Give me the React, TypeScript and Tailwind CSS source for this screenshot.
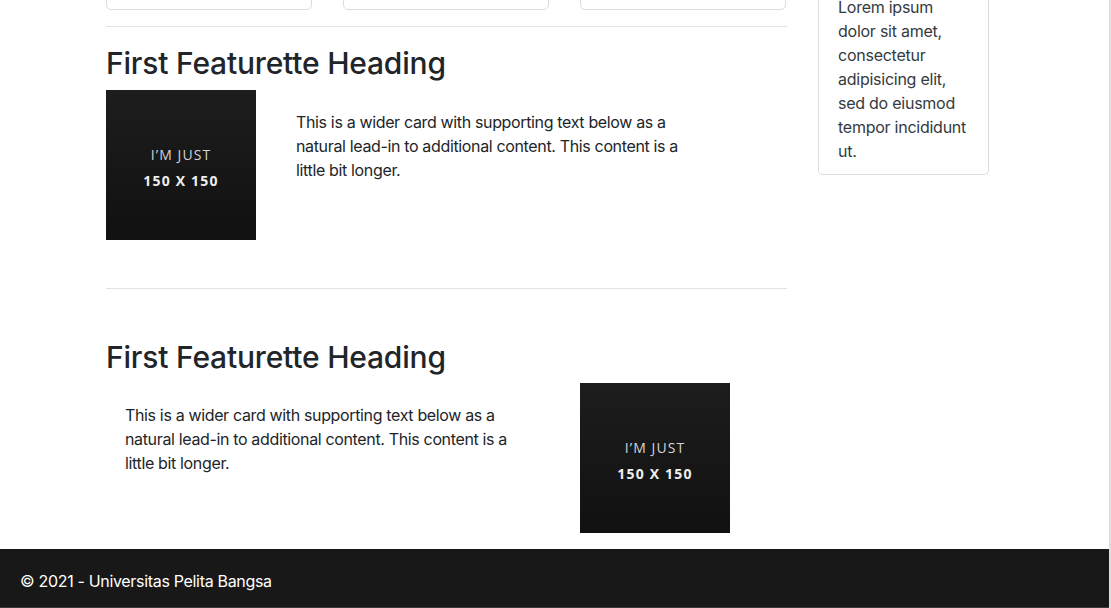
import React from "react";

function Placeholder() {
  return (
    <div className="w-[150px] h-[150px] shrink-0 bg-gradient-to-b from-[#1d1d1d] to-[#111111] flex flex-col items-center justify-center pt-[6px]" style={{ fontFamily: "'Open Sans', 'Lato', sans-serif" }}>
      <div className="text-[14px] leading-[16px] text-[#d4d4d4] tracking-[1.1px]">I’M JUST</div>
      <div className="text-[14px] leading-[18px] text-[#eeeeee] font-bold tracking-[1.2px] mt-[9px]">150 X 150</div>
    </div>
  );
}

export default function App() {
  const para = "This is a wider card with supporting text below as a natural lead-in to additional content. This content is a little bit longer.";
  return (
    <div className="w-[1111px] h-[608px] overflow-hidden bg-white flex flex-col border-r-2 border-[#dedede] text-[#212529]" style={{ fontFamily: "Inter, 'Noto Sans', sans-serif" }}>
      <div className="flex-1 overflow-hidden">
        <div className="flex pl-[106px] -mt-[90px]">
          <div className="w-[681px] shrink-0">
            <div className="flex gap-[31px]">
              <div className="w-[206px] h-[100px] border border-[#dcdcdc] rounded-[5px]" />
              <div className="w-[206px] h-[100px] border border-[#dcdcdc] rounded-[5px]" />
              <div className="w-[206px] h-[100px] border border-[#dcdcdc] rounded-[5px]" />
            </div>
            <div className="h-px bg-[#e2e2e2] mt-[16px]" />
            <h2 className="mt-[17px] text-[30px] leading-[38px] font-medium tracking-[-0.2px]">First Featurette Heading</h2>
            <div className="flex mt-[8px]">
              <Placeholder />
              <p className="ml-[40px] mt-[20px] w-[400px] text-[16px] leading-[24px] tracking-[-0.35px]">{para}</p>
            </div>
            <div className="h-px bg-[#e2e2e2] mt-[48px]" />
            <h2 className="mt-[49px] text-[30px] leading-[38px] font-medium tracking-[-0.2px]">First Featurette Heading</h2>
            <div className="flex mt-[7px]">
              <p className="ml-[19px] mt-[20px] w-[400px] text-[16px] leading-[24px] tracking-[-0.35px]">{para}</p>
              <div className="ml-[55px]">
                <Placeholder />
              </div>
            </div>
          </div>
          <div className="ml-[31px] w-[171px] shrink-0">
            <div className="h-[90px] border-x border-t border-[#dcdcdc] rounded-t-[5px]" />
            <div className="border-x border-b border-[#dcdcdc] rounded-b-[5px] pl-[19px] pr-[19px] -mt-[5px] pb-[11px] text-[16px] leading-[24px] text-[#343a40] tracking-[-0.25px]">
              <p>Lorem ipsum dolor sit amet, consectetur adipisicing elit, sed do eiusmod tempor incididunt ut.</p>
            </div>
          </div>
        </div>
      </div>
      <footer className="h-[59px] bg-[#181818] border-b border-[#3a3a3a] text-white pl-[20px] pt-[20px] text-[16px] leading-[24px] tracking-[-0.32px] shrink-0">
        © 2021 - Universitas Pelita Bangsa
      </footer>
    </div>
  );
}
